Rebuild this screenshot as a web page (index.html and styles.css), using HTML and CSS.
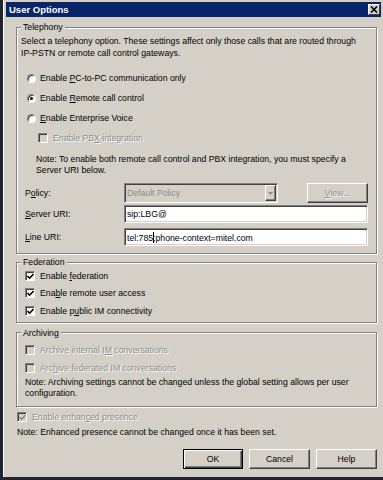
FILE: index.html
```html
<!DOCTYPE html>
<html lang="en">
<head>
    <meta charset="UTF-8">
    <title>User Options</title>
    <link rel="stylesheet" href="styles.css">
</head>
<body>

<div class="dialog">
    <div class="titlebar">
        <span class="title">User Options</span>
        <span class="close">
            <svg width="8" height="7" viewBox="0 0 8 7"><path d="M1 0.5 L7 6.5 M7 0.5 L1 6.5" stroke="#000" stroke-width="1.6"/></svg>
        </span>
    </div>

    <div class="content">
        <fieldset class="group telephony">
            <legend>Telephony</legend>
            <p class="intro">Select a telephony option. These settings affect only those calls that are routed through<br>IP-PSTN or remote call control gateways.</p>
            <div class="options">
                <label class="option"><span class="radio"></span><span>Enable <u>P</u>C-to-PC communication only</span></label>
                <label class="option"><span class="radio checked"></span><span>Enable <u>R</u>emote call control</span></label>
                <label class="option"><span class="radio"></span><span><u>E</u>nable Enterprise Voice</span></label>
                <label class="option sub disabled"><span class="check"></span><span>Enable PB<u>X</u> integration</span></label>
            </div>
            <p class="note">Note: To enable both remote call control and PBX integration, you must specify a<br>Server URI below.</p>
            <div class="field policy">
                <span class="field_label">P<u>o</u>licy:</span>
                <div class="combo">
                    <span class="combo_text">Default Policy</span>
                    <span class="combo_btn"><svg width="5" height="3" viewBox="0 0 5 3"><path d="M0 0 H5 L2.5 3 Z" fill="#8c8c8c"/></svg></span>
                </div>
                <button class="btn view disabled"><u>V</u>iew...</button>
            </div>
            <div class="field server">
                <span class="field_label"><u>S</u>erver URI:</span>
                <div class="textbox"><span>sip:LBG@</span></div>
            </div>
            <div class="field line">
                <span class="field_label"><u>L</u>ine URI:</span>
                <div class="textbox"><span>tel:785<span class="caret"></span>;phone-context=mitel.com</span></div>
            </div>
        </fieldset>

        <fieldset class="group federation">
            <legend>Federation</legend>
            <label class="option"><span class="check checked"><svg width="7" height="7" viewBox="0 0 7 7"><path d="M0.5 3 L2.6 5.2 L6.5 1" fill="none" stroke="#000" stroke-width="1.6"/></svg></span><span>Enable <u>f</u>ederation</span></label>
            <label class="option"><span class="check checked"><svg width="7" height="7" viewBox="0 0 7 7"><path d="M0.5 3 L2.6 5.2 L6.5 1" fill="none" stroke="#000" stroke-width="1.6"/></svg></span><span>Ena<u>b</u>le remote user access</span></label>
            <label class="option"><span class="check checked"><svg width="7" height="7" viewBox="0 0 7 7"><path d="M0.5 3 L2.6 5.2 L6.5 1" fill="none" stroke="#000" stroke-width="1.6"/></svg></span><span>Enable p<u>u</u>blic IM connectivity</span></label>
        </fieldset>

        <fieldset class="group archiving">
            <legend>Archiving</legend>
            <label class="option disabled"><span class="check"></span><span>Archive internal I<u>M</u> conversations</span></label>
            <label class="option disabled"><span class="check"></span><span>Arc<u>h</u>ive federated IM conversations</span></label>
            <p class="note">Note: Archiving settings cannot be changed unless the global setting allows per user<br>configuration.</p>
        </fieldset>

        <label class="option presence disabled"><span class="check checked"><svg width="7" height="7" viewBox="0 0 7 7"><path d="M0.5 3 L2.6 5.2 L6.5 1" fill="none" stroke="#8c8c8c" stroke-width="1.6"/></svg></span><span>Enable enhan<u>c</u>ed presence</span></label>
        <p class="presence_note">Note: Enhanced presence cannot be changed once it has been set.</p>

        <div class="buttons">
            <button class="btn default">OK</button>
            <button class="btn">Cancel</button>
            <button class="btn">Help</button>
        </div>
    </div>
</div>

</body>
</html>
```

FILE: styles.css
```css
*{
    box-sizing: border-box;
}
body{
    margin: 0;
    width: 383px;
    height: 480px;
    background: #1e2430;
    font-family: "Liberation Sans", Arial, sans-serif;
    font-size: 8.7px;
    color: #000;
    overflow: hidden;
}
p{
    margin: 0;
}
u{
    text-decoration: underline;
    text-underline-offset: 1px;
}
.dialog{
    width: 380px;
    height: 477px;
    margin-left: 3px;
    padding: 2px 2px 0;
    background: #d4d0c8;
    border-left: 1px solid #fff;
}
.titlebar{
    display: flex;
    align-items: center;
    justify-content: space-between;
    height: 15px;
    padding: 0 1px 0 3px;
    background: #0a246a;
}
.title{
    color: #fff;
    font-weight: bold;
    font-size: 9.5px;
}
.close{
    display: flex;
    align-items: center;
    justify-content: center;
    width: 12px;
    height: 11px;
    background: #d4d0c8;
    border: 1px solid;
    border-color: #fff #404040 #404040 #fff;
}
.content{
    padding: 5px 4px 0 10px;
}
.group{
    margin: 0;
    min-width: 0;
    padding: 3px 0 7px 4px;
    border: 1px solid #808080;
    box-shadow: inset 1px 1px 0 #fff, 1px 1px 0 #fff;
}
.group legend{
    padding: 0 2px;
    line-height: 10px;
    background: #d4d0c8;
}
.intro{
    line-height: 12px;
}
.options{
    margin-top: 9px;
}
.option{
    display: flex;
    align-items: center;
    height: 20px;
    white-space: nowrap;
}
.option.disabled{
    color: #8c8c8c;
    text-shadow: 1px 1px 0 #fff;
}
.radio{
    position: relative;
    width: 9px;
    height: 9px;
    margin: 0 4px 0 6px;
    border-radius: 50%;
    background: #fff;
    border: 1px solid;
    border-color: #808080 #fff #fff #808080;
    box-shadow: inset 1px 1px 0 #404040;
}
.radio.checked::after{
    content: "";
    position: absolute;
    left: 2px;
    top: 2px;
    width: 3px;
    height: 3px;
    border-radius: 50%;
    background: #000;
}
.check{
    display: flex;
    align-items: center;
    justify-content: center;
    width: 10px;
    height: 10px;
    margin-right: 5px;
    background: #fff;
    border: 1px solid;
    border-color: #808080 #fff #fff #808080;
    box-shadow: inset 1px 1px 0 #404040;
}
.check svg{
    margin: 1px 0 0 1px;
}
.disabled .check{
    background: #d4d0c8;
}
.option.sub .check{
    margin-left: 17px;
}
.telephony .note{
    margin: 6px 0 0 15px;
    line-height: 11px;
}
.field{
    display: flex;
    align-items: center;
}
.field_label{
    width: 99px;
    margin-left: 4px;
}
.policy{
    height: 20px;
    margin-top: 7px;
}
.server{
    margin-top: 2px;
}
.line{
    margin-top: 5px;
}
.textbox, .combo{
    display: flex;
    align-items: center;
    height: 18px;
    padding: 0 2px;
    background: #fff;
    border: 1px solid;
    border-color: #808080 #fff #fff #808080;
    box-shadow: inset 1px 1px 0 #404040, inset -1px -1px 0 #d4d0c8;
    white-space: nowrap;
}
.textbox{
    width: 244px;
}
.caret{
    display: inline-block;
    width: 1px;
    height: 11px;
    margin-right: -1px;
    vertical-align: -2px;
    background: #000;
}
.combo{
    width: 154px;
    height: 20px;
    padding-right: 1px;
    justify-content: space-between;
    background: #d4d0c8;
}
.combo_text{
    color: #8c8c8c;
}
.combo_btn{
    display: flex;
    align-items: center;
    justify-content: center;
    width: 11px;
    height: 16px;
    border: 1px solid;
    border-color: #fff #404040 #404040 #fff;
    box-shadow: inset -1px -1px 0 #808080;
}
.btn{
    width: 61px;
    height: 20px;
    padding: 0;
    font: inherit;
    color: #000;
    background: #d4d0c8;
    border: 1px solid;
    border-color: #fff #404040 #404040 #fff;
    box-shadow: inset -1px -1px 0 #808080;
}
.btn.view{
    margin-left: 29px;
}
.btn.disabled{
    color: #8c8c8c;
    text-shadow: 1px 1px 0 #fff;
}
.btn.default{
    width: 60px;
    border: 1px solid #000;
    box-shadow: inset 1px 1px 0 #fff, inset -1px -1px 0 #404040, inset -2px -2px 0 #808080;
}
.federation{
    margin-top: 3px;
    padding: 0 0 2px 4px;
}
.federation .option, .archiving .option{
    height: 17.5px;
    margin-left: 4px;
}
.archiving{
    margin-top: 5px;
}
.archiving .option{
    height: 18px;
}
.archiving .note{
    margin-left: 4px;
    line-height: 11px;
}
.presence{
    height: 18px;
    margin: 1px 0 0 1px;
}
.presence_note{
    padding-left: 1px;
    line-height: 12px;
}
.buttons{
    display: flex;
    justify-content: flex-end;
    gap: 6px;
    margin-top: 11px;
}
```
